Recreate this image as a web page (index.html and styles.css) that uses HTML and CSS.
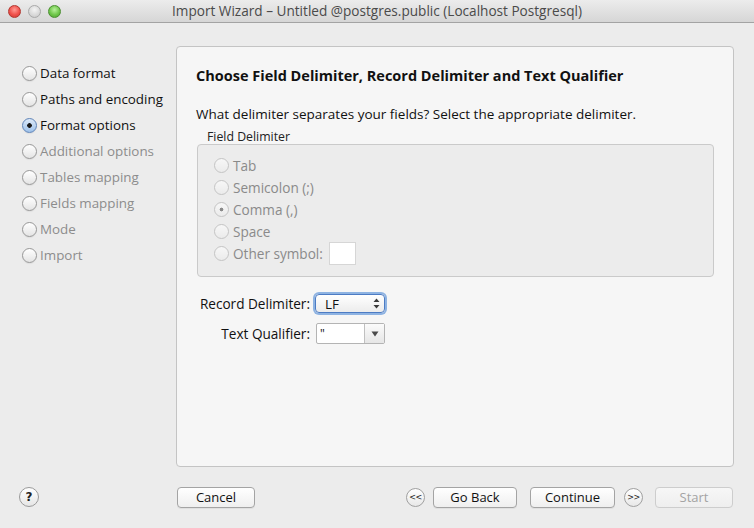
FILE: index.html
```html
<!DOCTYPE html>
<html>
<head>
<meta charset="utf-8">
<title>Import Wizard</title>
<link rel="stylesheet" href="styles.css">
</head>
<body>
<div class="window">
  <div class="titlebar">
    <div class="lights">
      <span class="light red"></span>
      <span class="light grey"></span>
      <span class="light green"></span>
    </div>
    <div class="title">Import Wizard – Untitled @postgres.public (Localhost Postgresql)</div>
    <div></div>
  </div>

  <div class="content">
    <ul class="steps">
      <li class="step"><span class="radio"></span>Data format</li>
      <li class="step"><span class="radio"></span>Paths and encoding</li>
      <li class="step"><span class="radio on"></span>Format options</li>
      <li class="step dim"><span class="radio"></span>Additional options</li>
      <li class="step dim"><span class="radio"></span>Tables mapping</li>
      <li class="step dim"><span class="radio"></span>Fields mapping</li>
      <li class="step dim"><span class="radio"></span>Mode</li>
      <li class="step dim"><span class="radio"></span>Import</li>
    </ul>

    <div class="panel">
      <h1 class="heading">Choose Field Delimiter, Record Delimiter and Text Qualifier</h1>
      <p class="desc">What delimiter separates your fields? Select the appropriate delimiter.</p>
      <div class="group-label">Field Delimiter</div>
      <div class="group">
        <div class="opt"><span class="radio dis"></span>Tab</div>
        <div class="opt"><span class="radio dis"></span>Semicolon (;)</div>
        <div class="opt"><span class="radio dis on"></span>Comma (,)</div>
        <div class="opt"><span class="radio dis"></span>Space</div>
        <div class="opt"><span class="radio dis"></span>Other symbol:<span class="symbol-box"></span></div>
      </div>

      <div class="form">
        <label class="form-label">Record Delimiter:</label>
        <div class="popup">
          <span class="popup-text">LF</span>
          <svg class="updown" width="7" height="11" viewBox="0 0 7 11"><path d="M3.5 0.5 L6.5 4 L0.5 4 Z M3.5 10.5 L6.5 7 L0.5 7 Z" fill="#3a3a3a"/></svg>
        </div>
        <label class="form-label">Text Qualifier:</label>
        <div class="combo">
          <span class="combo-text">"</span>
          <span class="combo-btn"><svg width="8" height="6" viewBox="0 0 8 6"><path d="M0.5 0.5 L7.5 0.5 L4 5.5 Z" fill="#4a4a4a"/></svg></span>
        </div>
      </div>
    </div>
  </div>

  <div class="footer">
    <span class="help">?</span>
    <button class="btn cancel">Cancel</button>
    <div class="nav">
      <span class="round">&lt;&lt;</span>
      <button class="btn back">Go Back</button>
      <button class="btn cont">Continue</button>
      <span class="round fwd">&gt;&gt;</span>
      <button class="btn start" disabled>Start</button>
    </div>
  </div>
</div>
</body>
</html>
```

FILE: styles.css
```css
html, body {
  margin: 0;
  padding: 0;
  background: #ececec;
}

.window {
  width: 754px;
  height: 528px;
  display: flex;
  flex-direction: column;
  background: #ececec;
  font-family: "Open Sans", "DejaVu Sans", sans-serif;
  font-size: 13.5px;
  color: #111;
  overflow: hidden;
}

/* Title bar */
.titlebar {
  height: 22px;
  flex: 0 0 22px;
  display: grid;
  grid-template-columns: 1fr auto 1fr;
  align-items: center;
  background: linear-gradient(#ececec, #d6d6d6);
  border-bottom: 1px solid #a3a3a3;
}
.lights {
  display: flex;
  gap: 7px;
  padding-left: 8px;
  align-items: center;
}
.light {
  width: 13px;
  height: 13px;
  border-radius: 50%;
  box-sizing: border-box;
}
.light.red {
  background: radial-gradient(circle at 50% 35%, #ff9a93 0, #f0514b 55%, #c83a33 100%);
  border: 1px solid #b3362f;
}
.light.grey {
  background: radial-gradient(circle at 50% 35%, #f4f4f4 0, #d8d8d8 60%, #c4c4c4 100%);
  border: 1px solid #a9a9a9;
}
.light.green {
  background: radial-gradient(circle at 50% 35%, #b8f09c 0, #6fc74a 55%, #4e9e32 100%);
  border: 1px solid #4a8f30;
}
.title {
  font-size: 13.6px;
  color: #4a4a4a;
  white-space: nowrap;
  line-height: 22px;
}

/* Content */
.content {
  flex: 1;
  display: flex;
  padding-top: 23px;
  padding-right: 20px;
}

.steps {
  list-style: none;
  margin: 0;
  padding: 14px 0 0 22px;
  width: 154px;
  flex: 0 0 154px;
}
.step {
  display: flex;
  align-items: center;
  height: 26px;
  font-size: 13.4px;
  color: #111;
  white-space: nowrap;
}
.step.dim {
  color: #8c8c8c;
}
.step .radio {
  margin-right: 3px;
}

.radio {
  display: inline-block;
  width: 15px;
  height: 15px;
  flex: 0 0 15px;
  box-sizing: border-box;
  border-radius: 50%;
  border: 1px solid #979797;
  background: linear-gradient(#ffffff, #e4e4e4);
  box-shadow: 0 1px 1px rgba(0,0,0,0.06);
}
.radio.on {
  border-color: #5f84b8;
  background:
    radial-gradient(circle, #1a1a1a 0, #1a1a1a 2px, transparent 2.6px),
    linear-gradient(#dce9f8, #9fc2ea);
}
.radio.dis {
  border-color: #c4c4c4;
  background: linear-gradient(#f7f7f7, #ebebeb);
  box-shadow: none;
}
.radio.dis.on {
  background:
    radial-gradient(circle, #8a8a8a 0, #8a8a8a 1.6px, transparent 2.2px),
    linear-gradient(#f7f7f7, #ebebeb);
}

.panel {
  flex: 1;
  height: 421px;
  box-sizing: border-box;
  background: #f6f6f6;
  border: 1px solid #c4c4c4;
  border-radius: 4px;
  padding: 19px 19px 0 19px;
}

.heading {
  margin: 0;
  font-size: 14.5px;
  font-weight: bold;
  line-height: 20px;
  color: #111;
}
.desc {
  margin: 18px 0 0 0;
  line-height: 20px;
  font-size: 13.5px;
}
.group-label {
  margin: 6px 0 0 11px;
  font-size: 12.3px;
  line-height: 14px;
  color: #222;
}
.group {
  margin: 0 0 0 1px;
  width: 517px;
  height: 133px;
  box-sizing: border-box;
  background: #ececec;
  border: 1px solid #cacaca;
  border-radius: 4px;
  padding: 9px 0 0 16px;
}
.opt {
  display: flex;
  align-items: center;
  height: 22px;
  color: #8a8a8a;
  font-size: 13.6px;
  white-space: nowrap;
}
.opt .radio {
  margin-right: 4px;
}
.symbol-box {
  display: inline-block;
  width: 27px;
  height: 23px;
  margin-left: 6px;
  box-sizing: border-box;
  background: #fff;
  border: 1px solid #d6d6d6;
}

.form {
  display: grid;
  grid-template-columns: 114px auto;
  column-gap: 5px;
  row-gap: 10px;
  align-items: center;
  margin-top: 16px;
  justify-items: start;
}
.form-label {
  justify-self: end;
  font-size: 13.6px;
  color: #111;
}
.popup {
  width: 70px;
  height: 19px;
  box-sizing: border-box;
  display: flex;
  align-items: center;
  justify-content: space-between;
  padding: 0 4px 0 9px;
  background: linear-gradient(#ffffff, #ececec);
  border: 1px solid #4d7cc4;
  border-radius: 4px;
  box-shadow: 0 0 0 2px #8eb3e2;
  font-size: 13.4px;
  margin-top: 1px;
}
.combo {
  width: 69px;
  height: 21px;
  box-sizing: border-box;
  display: flex;
  border: 1px solid #b4b4b4;
  border-radius: 2px;
  background: #fff;
  margin-left: 1px;
}
.combo-text {
  flex: 1;
  padding-left: 3px;
  line-height: 19px;
  font-size: 12px;
}
.combo-btn {
  width: 19px;
  display: flex;
  align-items: center;
  justify-content: center;
  border-left: 1px solid #c0c0c0;
  background: linear-gradient(#fbfbfb, #e6e6e6);
}

/* Footer */
.footer {
  flex: 0 0 61px;
  display: flex;
  align-items: center;
  padding: 0 21px 1px 19px;
  box-sizing: border-box;
}
.help {
  width: 20px;
  height: 20px;
  box-sizing: border-box;
  border-radius: 50%;
  border: 1px solid #9a9a9a;
  background: linear-gradient(#ffffff, #e6e6e6);
  display: flex;
  align-items: center;
  justify-content: center;
  font-family: "DejaVu Sans", sans-serif;
  font-weight: bold;
  font-size: 12px;
  color: #222;
}
.btn {
  height: 21px;
  box-sizing: border-box;
  border: 1px solid #a4a4a4;
  border-radius: 4px;
  background: linear-gradient(#ffffff, #efefef);
  box-shadow: 0 1px 0 rgba(0,0,0,0.05);
  font-family: "Open Sans", "DejaVu Sans", sans-serif;
  font-size: 13px;
  color: #111;
  padding: 0;
  line-height: 18px;
}
.cancel {
  width: 78px;
  margin-left: 138px;
}
.nav {
  margin-left: auto;
  display: flex;
  align-items: center;
}
.round {
  width: 19px;
  height: 19px;
  box-sizing: border-box;
  border-radius: 50%;
  border: 1px solid #a0a0a0;
  background: linear-gradient(#ffffff, #e8e8e8);
  display: flex;
  align-items: center;
  justify-content: center;
  font-family: "DejaVu Sans", sans-serif;
  font-size: 8px;
  letter-spacing: -0.5px;
  color: #222;
}
.back {
  width: 84px;
  margin-left: 8px;
}
.cont {
  width: 85px;
  margin-left: 13px;
}
.fwd {
  margin-left: 9px;
}
.start {
  width: 78px;
  margin-left: 12px;
  color: #a3a3a3;
  border-color: #cdcdcd;
  background: linear-gradient(#f7f7f7, #eeeeee);
  box-shadow: none;
}
```
